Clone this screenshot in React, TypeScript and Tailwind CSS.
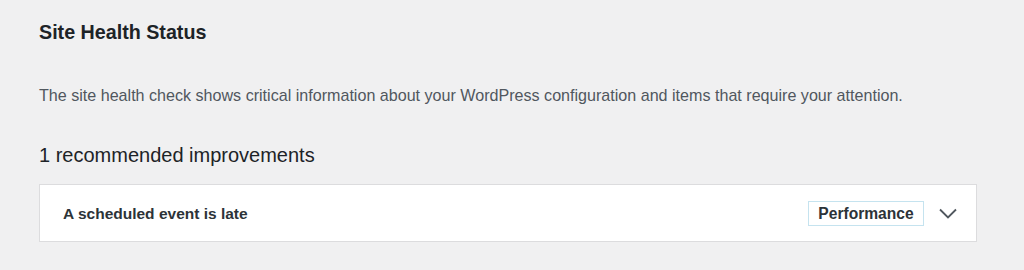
export default function App() {
  return (
    <div className="w-[1024px] h-[270px] bg-[#f0f0f1] text-[#1d2327] font-['Liberation_Sans',Arial,sans-serif] overflow-hidden">
      <div className="pl-[39px] pr-[47px] pt-[20px]">
        <h1 className="text-[19.7px] font-bold leading-[24px] text-[#1d2327]">Site Health Status</h1>
        <p className="mt-[41px] text-[16.1px] leading-[20px] text-[#50575e]">
          The site health check shows critical information about your WordPress configuration and items that require your attention.
        </p>
        <h2 className="mt-[37px] text-[20px] leading-[26px] text-[#1d2327]">1 recommended improvements</h2>
        <div className="mt-[16px] h-[58px] bg-white border border-[#dcdcde] flex items-center pl-[23px] pr-[18px]">
          <span className="flex-1 pt-[1px] text-[15.5px] font-bold text-[#2c3338]">A scheduled event is late</span>
          <span className="h-[25px] w-[116px] mt-[1px] flex items-center justify-center border border-[#c5e3ef] text-[15.6px] font-bold text-[#2c3338]">
            Performance
          </span>
          <svg className="ml-[14px] w-[20px] h-[20px]" viewBox="0 0 20 20" fill="none" stroke="#50575e" strokeWidth="1.8">
            <path d="M2 6.5l8 8 8-8" />
          </svg>
        </div>
      </div>
    </div>
  );
}
